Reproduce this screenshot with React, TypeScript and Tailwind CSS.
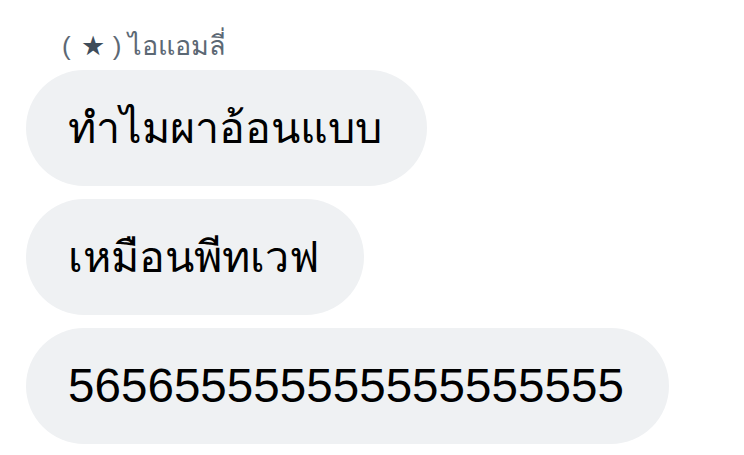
import React from 'react';

const messages = [
  { text: 'ทำไมผาอ้อนแบบ', thai: true },
  { text: 'เหมือนพีทเวฟ', thai: true },
  { text: '565655555555555555555', thai: false },
];

export default function App() {
  return (
    <div className="w-[744px] h-[455px] bg-white overflow-hidden font-['Liberation_Sans','Noto_Sans',sans-serif]">
      <div className="pt-[28px] pl-[26px] flex flex-col items-start">
        {/* sender name */}
        <div className="pl-[36px] h-[36px] flex items-center text-[26px] leading-[36px] text-[#5c6874] whitespace-nowrap">
          <span>(</span>
          <span className="ml-[10px] text-[27px] text-[#3f4d5b]">★</span>
          <span className="ml-[8px]">)</span>
          <span className="ml-[7px] text-[27px]">ไอแอมลี่</span>
        </div>
        <div className="mt-[6px] flex flex-col items-start gap-[13px]">
          {messages.map((m, i) => (
            <div
              key={i}
              className={
                m.thai
                  ? 'h-[116px] flex items-center rounded-full bg-[#eff1f3] pl-[42px] pr-[45px] text-[43px] text-black whitespace-nowrap'
                  : 'h-[116px] flex items-center rounded-full bg-[#eff1f3] pl-[42px] pr-[45px] text-[47.6px] text-black whitespace-nowrap'
              }
            >
              {m.text}
            </div>
          ))}
        </div>
      </div>
    </div>
  );
}
